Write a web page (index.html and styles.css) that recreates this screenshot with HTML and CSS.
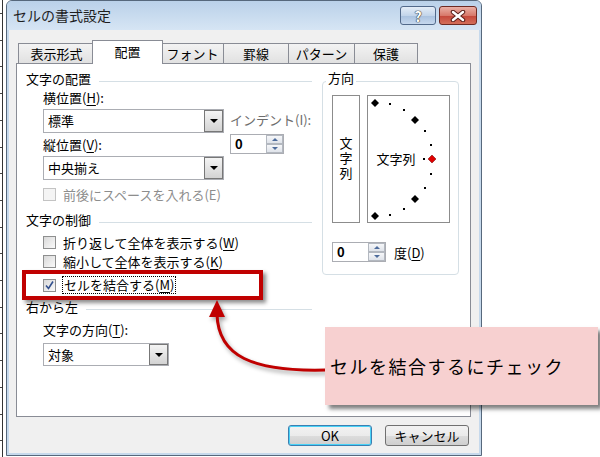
FILE: index.html
```html
<!DOCTYPE html>
<html lang="ja">
<head>
    <meta charset="UTF-8">
    <title>セルの書式設定</title>
    <link rel="stylesheet" href="styles.css">
</head>
<body>

<div class="sheet"></div>

<div class="dialog">
    <div class="titlebar">
        <span class="title">セルの書式設定</span>
        <div class="title-btn help">?</div>
        <div class="title-btn close">
            <svg width="16" height="12" viewBox="0 0 16 12">
                <path d="M3 2 L13 10 M13 2 L3 10" stroke="#5a1f1a" stroke-width="4.5" stroke-linecap="round"/>
                <path d="M3 2 L13 10 M13 2 L3 10" stroke="#fff" stroke-width="2.5" stroke-linecap="round"/>
            </svg>
        </div>
    </div>

    <div class="client">
        <div class="tabs">
            <div class="tab tab-format">表示形式</div>
            <div class="tab active tab-align">配置</div>
            <div class="tab tab-font">フォント</div>
            <div class="tab tab-border">罫線</div>
            <div class="tab tab-pattern">パターン</div>
            <div class="tab tab-protect">保護</div>
        </div>

        <div class="panel">
            <div class="left">
                <div class="group-head"><span>文字の配置</span><i></i></div>
                <div class="align-body">
                    <div class="align-fields">
                        <div class="label">横位置(<u>H</u>):</div>
                        <div class="combo"><span>標準</span><div class="drop"></div></div>
                        <div class="label gap3">縦位置(<u>V</u>):</div>
                        <div class="combo"><span>中央揃え</span><div class="drop"></div></div>
                    </div>
                    <div class="indent">
                        <div class="label grey">インデント(I):</div>
                        <div class="spin"><span class="val">0</span><div class="arrows"><b class="up"></b><b class="down"></b></div></div>
                    </div>
                </div>
                <div class="check-row disabled first"><span class="box"></span><span>前後にスペースを入れる(E)</span></div>

                <div class="group-head gap9"><span>文字の制御</span><i></i></div>
                <div class="check-row gap5"><span class="box"></span><span>折り返して全体を表示する(<u>W</u>)</span></div>
                <div class="check-row gap3"><span class="box"></span><span>縮小して全体を表示する(<u>K</u>)</span></div>
                <div class="check-row gap8">
                    <span class="box">
                        <svg width="11" height="11" viewBox="0 0 11 11"><path d="M2 5.5 L4.5 8.5 L9 1.5" fill="none" stroke="#32508e" stroke-width="1.6"/></svg>
                    </span>
                    <span class="focus">セルを結合する(<u>M</u>)</span>
                </div>

                <div class="group-head gap5"><span>右から左</span><i></i></div>
                <div class="label indented gap5">文字の方向(<u>T</u>):</div>
                <div class="combo short"><span>対象</span><div class="drop"></div></div>
            </div>

            <fieldset class="direction">
                <legend>方向</legend>
                <div class="orient-row">
                    <div class="vtext">文字列</div>
                    <div class="orient">
                        <svg width="81" height="126" viewBox="0 0 81 126">
                            <g fill="#000">
                                <path d="M7 -3 L11 1 L7 5 L3 1 Z" transform="translate(0,6)"/>
                                <path d="M7 -3 L11 1 L7 5 L3 1 Z" transform="translate(0,119)"/>
                                <path d="M7 -3 L11 1 L7 5 L3 1 Z" transform="translate(40,23)"/>
                                <path d="M7 -3 L11 1 L7 5 L3 1 Z" transform="translate(40,102)"/>
                                <rect x="21" y="7" width="2" height="2"/>
                                <rect x="35" y="13" width="2" height="2"/>
                                <rect x="56" y="34" width="2" height="2"/>
                                <rect x="62" y="48" width="2" height="2"/>
                                <rect x="62" y="77" width="2" height="2"/>
                                <rect x="56" y="91" width="2" height="2"/>
                                <rect x="35" y="112" width="2" height="2"/>
                                <rect x="21" y="118" width="2" height="2"/>
                                <rect x="55" y="62" width="2" height="2"/>
                            </g>
                            <path d="M64 -3 L68 1 L64 5 L60 1 Z" transform="translate(0,62)" fill="#e00000" stroke="#600" stroke-width="0.5"/>
                            <text x="28" y="68" text-anchor="middle" class="orient-text">文字列</text>
                        </svg>
                    </div>
                </div>
                <div class="degree-row">
                    <div class="spin"><span class="val">0</span><div class="arrows"><b class="up"></b><b class="down"></b></div></div>
                    <span class="degree-label">度(<u>D</u>)</span>
                </div>
            </fieldset>
        </div>

        <div class="buttons">
            <div class="btn default">OK</div>
            <div class="btn">キャンセル</div>
        </div>
    </div>
</div>

<!-- annotation layer -->
<div class="highlight"></div>
<svg class="arrow" width="600" height="457" viewBox="0 0 600 457">
    <path d="M326 370 C 252 372 218 356 217 314" fill="none" stroke="#c00000" stroke-width="3"/>
    <path d="M217 300 L225 317 L209 317 Z" fill="#c00000"/>
</svg>
<div class="callout">セルを結合するにチェック</div>

</body>
</html>
```

FILE: styles.css
```css
body {
    margin: 0;
    width: 600px;
    height: 457px;
    background-color: #fff;
    display: flex;
    position: relative;
    overflow: hidden;
    font-family: "Noto Sans CJK JP", "Noto Sans", sans-serif;
    font-size: 13px;
    color: #000;
}
u {
    text-decoration-thickness: 1px;
    text-underline-offset: 2px;
}

/* spreadsheet edge behind the dialog */
.sheet {
    width: 2px;
    height: 457px;
    border-right: 1px solid #333;
    background: repeating-linear-gradient(180deg, transparent 0, transparent 13px, #444 13px, #444 14px, transparent 14px, transparent 26.7px);
}

.dialog {
    margin-left: 3px;
    width: 476px;
    height: 456px;
    box-sizing: border-box;
    border: 1px solid #56687c;
    border-radius: 6px 6px 0 0;
    background-color: #c6d9ec;
    display: flex;
    flex-direction: column;
}
.titlebar {
    height: 29px;
    display: flex;
    align-items: flex-start;
    padding: 0 4px 0 6px;
    background: linear-gradient(#bad1e9, #d6e5f4);
    border-radius: 5px 5px 0 0;
}
.title {
    flex: 1;
    line-height: 29px;
    font-size: 14px;
    color: #1e1e1e;
}
.title-btn {
    margin-top: 5px;
    height: 19px;
    box-sizing: border-box;
    border: 1px solid #52698a;
    border-radius: 3px;
    display: flex;
    align-items: center;
    justify-content: center;
}
.help {
    width: 36px;
    margin-right: 3px;
    background: linear-gradient(#e4edf7 0%, #c3d5ea 50%, #a9c1de 51%, #c6d8ee 100%);
    color: #fff;
    font-weight: bold;
    font-size: 14px;
    text-shadow: 0 0 1px #333, 0 0 1px #333, 0 0 1px #333;
}
.close {
    width: 38px;
    border-color: #6e2a22;
    background: linear-gradient(#eab0a6 0%, #d8796b 50%, #c4463a 51%, #d46f5a 100%);
}

.client {
    flex: 1;
    margin: 0 2px 2px;
    background-color: #f0f0f0;
}

.tabs {
    height: 33px;
    display: flex;
    align-items: flex-end;
    padding-left: 9px;
}
.tab {
    box-sizing: border-box;
    height: 20px;
    border: 1px solid #898c95;
    border-bottom: none;
    background: linear-gradient(#f3f3f3, #e1e1e1);
    text-align: center;
    line-height: 19px;
    margin-right: -1px;
}
.tab.active {
    height: 24px;
    line-height: 22px;
    background: #fff;
    position: relative;
    z-index: 1;
    margin: 0 -2px -1px -2px;
}
.tab-format { width: 77px; }
.tab-align { width: 71px; }
.tab-font { width: 63px; }
.tab-border { width: 66px; }
.tab-pattern { width: 67px; }
.tab-protect { width: 64px; }

.panel {
    box-sizing: border-box;
    width: 455px;
    height: 354px;
    margin-left: 7px;
    border: 1px solid #898c95;
    background-color: #fff;
    display: flex;
    padding-left: 9px;
}
.left {
    width: 286px;
}
.group-head {
    height: 18px;
    line-height: 18px;
    margin-top: 6px;
    display: flex;
    align-items: center;
}
.group-head i {
    flex: 1;
    height: 1px;
    margin: 5px 0 0 8px;
    background-color: #d5dfe5;
}
.gap3 { margin-top: 3px; }
.gap5 { margin-top: 5px; }
.gap8 { margin-top: 8px; }
.gap9 { margin-top: 9px; }

.label {
    height: 18px;
    line-height: 18px;
    margin-top: 1px;
}
.label.grey {
    color: #6d6d6d;
}
.label.indented {
    padding-left: 17px;
}
.label.gap3 { margin-top: 3px; }
.label.gap5 { margin-top: 5px; }

.align-body {
    display: flex;
    padding-left: 17px;
}
.align-fields {
    width: 181px;
}
.indent {
    margin-left: 6px;
    padding-top: 22px;
}

.combo {
    box-sizing: border-box;
    height: 24px;
    margin-top: 2px;
    border: 1px solid #abadb3;
    background-color: #fff;
    display: flex;
}
.combo span {
    flex: 1;
    padding-left: 4px;
    line-height: 22px;
}
.combo.short {
    width: 126px;
    height: 23px;
    margin: 4px 0 0 17px;
}
.combo.short span {
    line-height: 21px;
}
.drop {
    width: 19px;
    box-sizing: border-box;
    border: 1px solid #777;
    background: linear-gradient(#f4f4f4, #d3d3d3);
    display: flex;
    align-items: center;
    justify-content: center;
}
.drop::after {
    content: "";
    border-left: 4px solid transparent;
    border-right: 4px solid transparent;
    border-top: 4px solid #000;
}

.spin {
    box-sizing: border-box;
    width: 54px;
    height: 20px;
    margin-top: 5px;
    border: 1px solid #abadb3;
    background-color: #fff;
    display: flex;
}
.spin .val {
    flex: 1;
    padding-left: 4px;
    line-height: 18px;
    font-weight: bold;
}
.spin .arrows {
    width: 17px;
    display: flex;
    flex-direction: column;
}
.spin b {
    flex: 1;
    border: 1px solid #b3b8c0;
    background: linear-gradient(#f6f7f9, #dfe3ea);
    display: flex;
    align-items: center;
    justify-content: center;
}
.spin b.up::after {
    content: "";
    border-left: 3px solid transparent;
    border-right: 3px solid transparent;
    border-bottom: 3px solid #4e6c9c;
}
.spin b.down::after {
    content: "";
    border-left: 3px solid transparent;
    border-right: 3px solid transparent;
    border-top: 3px solid #4e6c9c;
}

.check-row {
    height: 16px;
    padding-left: 17px;
    display: flex;
    align-items: center;
}
.check-row.first {
    margin-top: 6px;
}
.box {
    box-sizing: border-box;
    width: 13px;
    height: 13px;
    margin-right: 7px;
    border: 1px solid #8e8f8f;
    background: linear-gradient(135deg, #d9d9d9, #fafafa);
    display: flex;
    align-items: center;
    justify-content: center;
}
.check-row.disabled {
    color: #8d8d8d;
}
.check-row.disabled .box {
    border-color: #c3c3c3;
    background: #f4f4f4;
}
.focus {
    margin-left: -1px;
    padding: 0 1px;
    line-height: 16px;
    border: 1px dotted #000;
}

.direction {
    box-sizing: border-box;
    width: 137px;
    height: 206px;
    margin: 5px 0 0 10px;
    padding: 0 0 0 9px;
    border: 1px solid #d5dfe5;
    border-radius: 4px;
}
.direction legend {
    padding: 0 2px 6px;
    margin-left: -6px;
    line-height: 18px;
}
.orient-row {
    display: flex;
    margin-top: 2px;
}
.vtext {
    box-sizing: border-box;
    width: 28px;
    height: 128px;
    border: 1px solid #8c8c8c;
    writing-mode: vertical-rl;
    text-orientation: upright;
    display: flex;
    align-items: center;
    justify-content: center;
    letter-spacing: 2px;
}
.orient {
    box-sizing: border-box;
    width: 83px;
    height: 128px;
    margin-left: 7px;
    border: 1px solid #8c8c8c;
}
.orient svg {
    display: block;
}
.orient-text {
    font-family: "Noto Sans CJK JP", sans-serif;
    font-size: 13px;
}
.degree-row {
    display: flex;
    align-items: center;
    margin-top: 14px;
}
.degree-label {
    margin: 5px 0 0 8px;
}

.buttons {
    display: flex;
    justify-content: flex-end;
    gap: 13px;
    margin-top: 8px;
    padding-right: 10px;
}
.btn {
    box-sizing: border-box;
    width: 84px;
    height: 21px;
    border: 1px solid #707070;
    border-radius: 3px;
    background: linear-gradient(#f2f2f2 0%, #ebebeb 50%, #dddddd 51%, #cfcfcf 100%);
    text-align: center;
    line-height: 19px;
}
.btn.default {
    border-color: #3c7fb1;
    box-shadow: inset 0 0 0 1px #48d2f7;
}

/* annotations over the screenshot */
.highlight {
    position: absolute;
    left: 22px;
    top: 270px;
    width: 241px;
    height: 30px;
    box-sizing: border-box;
    border: 4px solid #c00000;
    box-shadow: 3px 3px 4px rgba(0, 0, 0, 0.45);
}
.arrow {
    position: absolute;
    left: 0;
    top: 0;
    filter: drop-shadow(2px 3px 2px rgba(0, 0, 0, 0.35));
}
.callout {
    position: absolute;
    left: 325px;
    top: 327px;
    width: 273px;
    height: 78px;
    box-sizing: border-box;
    padding-left: 5px;
    background-color: #f7d0d0;
    box-shadow: 4px 4px 4px rgba(0, 0, 0, 0.5);
    display: flex;
    align-items: center;
    font-size: 18px;
    letter-spacing: 1.5px;
}
```
